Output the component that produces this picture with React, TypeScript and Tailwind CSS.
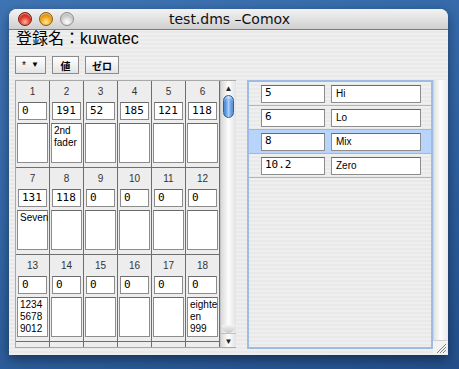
import React from 'react';

const rows = [
  {
    nums: [1, 2, 3, 4, 5, 6],
    vals: ['0', '191', '52', '185', '121', '118'],
    notes: [[], ['2nd', 'fader'], [], [], [], []],
  },
  {
    nums: [7, 8, 9, 10, 11, 12],
    vals: ['131', '118', '0', '0', '0', '0'],
    notes: [['Seven'], [], [], [], [], []],
  },
  {
    nums: [13, 14, 15, 16, 17, 18],
    vals: ['0', '0', '0', '0', '0', '0'],
    notes: [['1234', '5678', '9012'], [], [], [], [], ['eighte', 'en', '999']],
  },
];

const params = [
  { v: '5', name: 'Hi', sel: false },
  { v: '6', name: 'Lo', sel: false },
  { v: '8', name: 'Mix', sel: true },
  { v: '10.2', name: 'Zero', sel: false },
];

const Light = ({ color }: { color: 'red' | 'yellow' | 'gray' }) => {
  const bg =
    color === 'red'
      ? 'bg-[radial-gradient(circle_at_50%_75%,#ffb4a4_0%,#e0402e_45%,#a11409_100%)] border-[#7a1a10]'
      : color === 'yellow'
      ? 'bg-[radial-gradient(circle_at_50%_75%,#ffe9a0_0%,#f2a81c_45%,#b36a05_100%)] border-[#8a5a10]'
      : 'bg-[radial-gradient(circle_at_50%_75%,#ffffff_0%,#d6d6d6_45%,#9a9a9a_100%)] border-[#8a8a8a]';
  return <div className={`w-[14px] h-[14px] rounded-full border ${bg} shadow-[inset_0_1px_1px_rgba(255,255,255,0.6)]`} />;
};

const Cell = ({ n, v, note }: { n: number; v: string; note: string[] }) => (
  <div className="w-[34px] shrink-0 flex flex-col border-r border-[#6e6e6e]">
    <div className="h-[21px] flex items-center justify-center text-[10px] text-[#333] font-['Liberation_Sans',sans-serif]">
      {n}
    </div>
    <div className="mx-[2px] h-[18px] bg-white border border-[#8c8c8c] border-t-[#6a6a6a] pl-[3px] flex items-center text-[11px] text-black font-['DejaVu_Sans_Mono',monospace]">
      {v}
    </div>
    <div className="mt-[3px] mx-[1px] h-[40px] bg-white border border-[#8c8c8c] border-t-[#6a6a6a] px-[2px] pt-[1px] text-[10px] leading-[12px] text-black font-['Liberation_Sans',sans-serif]">
      {note.map((l, i) => (
        <div key={i}>{l}</div>
      ))}
    </div>
    <div className="h-[4px]" />
  </div>
);

export default function App() {
  return (
    <div className="w-[459px] h-[369px] overflow-hidden bg-[linear-gradient(160deg,#3f74b4_0%,#3468a8_40%,#2a5a98_75%,#244f8a_100%)] pl-[9px] pt-[9px]">
      <div className="w-[439px] h-[346px] flex flex-col rounded-t-[8px] overflow-hidden shadow-[0_4px_12px_rgba(0,0,0,0.45)] bg-[repeating-linear-gradient(180deg,#efefef_0px,#efefef_2px,#e9e9e9_2px,#e9e9e9_4px)]">
        {/* title bar */}
        <div className="h-[21px] shrink-0 flex items-center bg-gradient-to-b from-[#f2f2f2] via-[#e2e2e2] to-[#cfcfcf] border-b border-[#7d7d7d] relative">
          <div className="flex items-center gap-[7px] pl-[9px]">
            <Light color="red" />
            <Light color="yellow" />
            <Light color="gray" />
          </div>
          <div className="absolute inset-0 flex items-center justify-center text-[14px] text-[#111] font-['DejaVu_Sans',sans-serif] pl-[2px]">
            test.dms –Comox
          </div>
        </div>

        {/* body */}
        <div className="flex flex-col">
          <div className="pl-[7px] h-[17px] text-[16px] leading-[17px] text-black font-['Liberation_Sans','Noto_Sans_CJK_JP',sans-serif]">
            登録名：kuwatec
          </div>

          <div className="mt-[9px] ml-[6px] flex items-center">
            <div className="w-[31px] h-[18px] flex items-center justify-center gap-[5px] bg-gradient-to-b from-[#ffffff] to-[#e4e4e4] border border-[#8a8a8a] text-[10px] text-black font-['Liberation_Sans',sans-serif]">
              <span>*</span>
              <span className="text-[8px]">▼</span>
            </div>
            <div className="ml-[6px] w-[27px] h-[18px] flex items-center justify-center bg-gradient-to-b from-[#ffffff] to-[#e4e4e4] border border-[#8a8a8a] text-[10px] font-bold text-black font-['Noto_Sans_CJK_JP',sans-serif]">
              値
            </div>
            <div className="ml-[6px] w-[34px] h-[18px] flex items-center justify-center bg-gradient-to-b from-[#ffffff] to-[#e4e4e4] border border-[#8a8a8a] text-[10px] font-bold text-black font-['Noto_Sans_CJK_JP',sans-serif]">
              ゼロ
            </div>
          </div>

          <div className="mt-[6px] ml-[6px] flex items-start">
            {/* fader grid */}
            <div className="h-[268px] flex border-l border-t border-b border-[#a8a8a8] bg-[#ededed]">
              <div className="w-[204px] overflow-hidden flex flex-col">
                {rows.map((r, i) => (
                  <div key={i} className="flex shrink-0 border-b border-[#6e6e6e]">
                    {r.nums.map((n, j) => (
                      <Cell key={n} n={n} v={r.vals[j]} note={r.notes[j]} />
                    ))}
                  </div>
                ))}
                {/* top of the next, scrolled-off row */}
                <div className="flex flex-1">
                  {[0, 1, 2, 3, 4, 5].map((k) => (
                    <div key={k} className="w-[34px] shrink-0 border-r border-[#6e6e6e]" />
                  ))}
                </div>
              </div>
              {/* scrollbar */}
              <div className="w-[16px] flex flex-col bg-gradient-to-r from-[#d9d9d9] via-[#fdfdfd] to-[#e2e2e2] border-l border-[#c4c4c4]">
                <div className="h-[14px] flex items-center justify-center text-[8px] text-[#222]">▲</div>
                <div className="mx-[2px] h-[23px] rounded-full border border-[#2d5ea6] bg-gradient-to-r from-[#2f6fcb] via-[#a9d0f8] to-[#3a78d0] shadow-[inset_0_2px_2px_rgba(255,255,255,0.5)]" />
                <div className="flex-1" />
                <div className="h-[8px] mx-[1px] rounded-b-full bg-gradient-to-b from-[#f4f4f4] to-[#c8c8c8]" />
                <div className="h-[14px] flex items-center justify-center text-[8px] text-[#222] border-t border-[#c0c0c0]">▼</div>
              </div>
            </div>

            {/* parameter list */}
            <div className="ml-[11px] w-[186px] h-[269px] border-2 border-[#9dbbe3] bg-[repeating-linear-gradient(180deg,#efefef_0px,#efefef_2px,#e9e9e9_2px,#e9e9e9_4px)]">
              {params.map((p) => (
                <div
                  key={p.name}
                  className={`h-[24px] flex items-center border-b border-[#b4b4b4] pl-[12px] ${p.sel ? 'bg-[#b7d5fb]' : ''}`}
                >
                  <div className="w-[64px] h-[18px] bg-white border border-[#8c8c8c] border-t-[#6a6a6a] pl-[3px] flex items-center text-[11px] text-black font-['DejaVu_Sans_Mono',monospace]">
                    {p.v}
                  </div>
                  <div className="ml-[6px] w-[90px] h-[18px] bg-white border border-[#8c8c8c] border-t-[#6a6a6a] pl-[4px] flex items-center text-[10px] text-black font-['Liberation_Sans',sans-serif]">
                    {p.name}
                  </div>
                </div>
              ))}
            </div>

            {/* right scroll track + grow box */}
            <div className="w-[14px] flex flex-col">
              <div className="h-[260px] bg-gradient-to-r from-[#e2e2e2] via-[#fdfdfd] to-[#ececec] border-l border-[#d0d0d0]" />
              <div className="h-[14px] flex items-end justify-end bg-[#f2f2f2] border-t border-[#d0d0d0]">
                <svg width="12" height="12" viewBox="0 0 12 12">
                  <line x1="2" y1="11" x2="11" y2="2" stroke="#808080" strokeWidth="1" />
                  <line x1="5" y1="11" x2="11" y2="5" stroke="#808080" strokeWidth="1" />
                  <line x1="8" y1="11" x2="11" y2="8" stroke="#808080" strokeWidth="1" />
                </svg>
              </div>
            </div>
          </div>
        </div>
      </div>
    </div>
  );
}
